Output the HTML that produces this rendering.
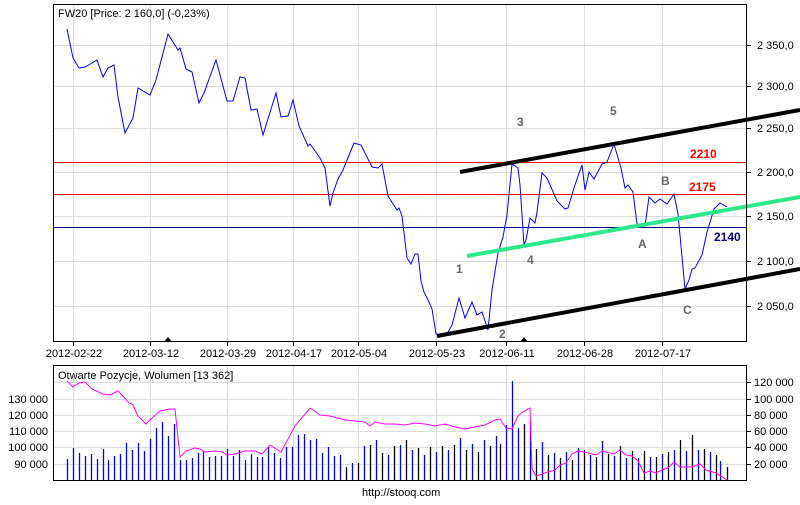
<!DOCTYPE html>
<html><head><meta charset="utf-8"><style>
body{margin:0;background:#fff;width:800px;height:500px;overflow:hidden}
svg text{font-family:"Liberation Sans",sans-serif;font-size:11px;fill:#000}
</style></head><body>
<svg width="800" height="500" xmlns="http://www.w3.org/2000/svg">
<rect width="800" height="500" fill="#fff"/>
<g stroke="#dcdcdc" stroke-width="1">
<path d="M73.5 4V342M150.5 4V342M227.5 4V342M293.5 4V342M358.5 4V342M436.5 4V342M506.5 4V342M584.5 4V342M662.5 4V342"/>
<path d="M53 45.5H747M53 86.5H747M53 128.5H747M53 172.5H747M53 216.5H747M53 261.5H747M53 306.5H747"/>
<path d="M73.5 366V480M150.5 366V480M227.5 366V480M293.5 366V480M358.5 366V480M436.5 366V480M506.5 366V480M584.5 366V480M662.5 366V480"/>
<path d="M53 382.5H747M53 399.5H747M53 415.5H747M53 431.5H747M53 447.5H747M53 464.5H747"/>
</g>
<path d="M53 162.5H747M53 194.5H747" stroke="#f00" stroke-width="1"/>
<path d="M53 227.5H747" stroke="#000080" stroke-width="1"/>
<polyline fill="none" stroke="#00f" stroke-width="1" points="67,29 73,58 79,68 85,67 92,63 97,60 103,77 108,68 114,65 118,97 125,133 133,118 138,88 150,95 156,80 168,34 178,50 180,48 186,69 192,72 199,103 204,93 216,60 227,101 233,101 240,77 245,78 251,110 257,109 263,135 276,93 281,117 288,116 293,100 299,126 308,146 310,144 320,158 325,168 330,206 333,193 338,179 343,170 354,143 361,145 372,167 378,168 382,164 388,196 397,210 399,208 402,216 407,258 411,264 415,254 418,254 421,281 424,292 429,302 432,309 436,334 441,335 447,334 452,325 459,298 465,318 472,302 477,315 482,312 488,330 492,290 498,253 503,237 507,215 512,164 518,168 520,185 524,245 526,240 530,218 535,223 537,212 542,173 547,178 557,201 565,209 568,208 574,188 577,179 582,165 585,190 589,172 594,179 602,164 607,162 614,144 621,168 625,188 628,185 633,192 637,224 641,224 645,226 649,197 655,203 660,199 667,204 674,194 678,214 681,246 685,289 689,280 692,269 695,268 702,255 707,232 714,209 720,203 727,207"/>
<path d="M460 172L800 110" stroke="#000" stroke-width="4"/>
<path d="M437 336L800 269" stroke="#000" stroke-width="4"/>
<path d="M467 256L800 197" stroke="#2de88a" stroke-width="4"/>
<text x="517" y="126" style="fill:#666;font-size:12px;font-weight:bold">3</text>
<text x="610" y="115" style="fill:#666;font-size:12px;font-weight:bold">5</text>
<text x="456" y="273" style="fill:#666;font-size:12px;font-weight:bold">1</text>
<text x="527" y="264" style="fill:#666;font-size:12px;font-weight:bold">4</text>
<text x="499" y="338" style="fill:#666;font-size:12px;font-weight:bold">2</text>
<text x="638" y="248" style="fill:#666;font-size:12px;font-weight:bold">A</text>
<text x="661" y="185" style="fill:#666;font-size:12px;font-weight:bold">B</text>
<text x="683" y="314" style="fill:#666;font-size:12px;font-weight:bold">C</text>
<text x="690" y="158" style="fill:#f00;font-size:12px;font-weight:bold">2210</text>
<text x="689" y="191" style="fill:#f00;font-size:12px;font-weight:bold">2175</text>
<text x="714" y="241" style="fill:#000080;font-size:12px;font-weight:bold">2140</text>
<rect x="53.5" y="4.5" width="693" height="337" fill="none" stroke="#000"/>
<text x="58" y="17">FW20 [Price: 2 160,0] (-0,23%)</text>
<path d="M164 342L168 337L172 342ZM520 342L524 337L528 342Z" fill="#000"/>
<text x="757" y="49">2 350,0</text><text x="757" y="90">2 300,0</text><text x="757" y="132">2 250,0</text><text x="757" y="176">2 200,0</text><text x="757" y="220">2 150,0</text><text x="757" y="265">2 100,0</text><text x="757" y="310">2 050,0</text>
<g stroke="#000"><path d="M73.5 342V346M150.5 342V346M227.5 342V346M293.5 342V346M358.5 342V346M436.5 342V346M506.5 342V346M584.5 342V346M662.5 342V346M747 45.5H751M747 86.5H751M747 128.5H751M747 172.5H751M747 216.5H751M747 261.5H751M747 306.5H751"/></g>
<text x="74" y="357" text-anchor="middle">2012-02-22</text><text x="151" y="357" text-anchor="middle">2012-03-12</text><text x="228" y="357" text-anchor="middle">2012-03-29</text><text x="294" y="357" text-anchor="middle">2012-04-17</text><text x="359" y="357" text-anchor="middle">2012-05-04</text><text x="437" y="357" text-anchor="middle">2012-05-23</text><text x="507" y="357" text-anchor="middle">2012-06-11</text><text x="585" y="357" text-anchor="middle">2012-06-28</text><text x="663" y="357" text-anchor="middle">2012-07-17</text>
<g id="bars" stroke-width="1.3"></g>
<polyline fill="none" stroke="#f0f" stroke-width="1" points="67,381 73,387 79,383 85,382 92,389 103,394 110,395 118,391 123,396 128,402 133,405 138,416 146,424 152,418 160,411 170,409 175,409 180,457 186,451 195,448 200,449 205,452 215,451 222,452 227,455 235,454 245,451 255,451 262,454 270,445 281,452 295,426 310,408 320,415 330,416 345,420 355,421 365,422 370,426 375,422 385,424 395,424 405,425 415,423 425,424 435,426 445,424 455,427 465,429 475,427 485,425 495,420 500,419 506,428 512,429 518,416 524,411 530,408 532,469 536,476 548,472 555,470 560,465 566,463 572,454 578,451 584,452 596,455 602,451 614,454 620,450 626,455 632,456 638,461 644,473 650,471 656,473 662,470 668,468 674,462 680,467 692,467 700,464 706,470 716,473 727,480"/>
<rect x="53.5" y="365.5" width="693" height="115" fill="none" stroke="#000"/>
<text x="58" y="379">Otwarte Pozycje, Wolumen [13 362]</text>
<text x="48" y="403" text-anchor="end">130 000</text><text x="48" y="419" text-anchor="end">120 000</text><text x="48" y="435" text-anchor="end">110 000</text><text x="48" y="451" text-anchor="end">100 000</text><text x="48" y="468" text-anchor="end">90 000</text>
<text x="754" y="386">120 000</text><text x="754" y="403">100 000</text><text x="754" y="419">80 000</text><text x="754" y="435">60 000</text><text x="754" y="451">40 000</text><text x="754" y="468">20 000</text>
<g stroke="#000"><path d="M747 382.5H751M747 399.5H751M747 415.5H751M747 431.5H751M747 447.5H751M747 464.5H751"/></g>
<text x="362" y="496">http://stooq.com</text>
</svg>
<script>
var d=[[67,459],[73,448],[79,453],[85,456],[91,454],[97,459],[103,449],[108,460],[114,456],[120,454],[126,443],[132,450],[138,443],[144,451],[150,439],[156,428],[162,422],[168,436],[174,424],[180,460],[186,460],[192,458],[198,453],[203,451],[209,457],[215,456],[221,456],[227,449],[233,456],[239,450],[245,460],[251,454],[257,457],[262,457],[268,447],[274,453],[280,458],[286,447],[292,447],[298,435],[304,434],[310,440],[316,439],[322,453],[328,447],[334,456],[340,455],[346,467],[352,463],[358,463],[364,446],[370,445],[376,440],[382,453],[388,455],[394,446],[400,445],[406,440],[412,450],[418,448],[424,455],[430,447],[436,452],[442,446],[448,450],[454,445],[460,438],[466,450],[472,444],[478,452],[484,440],[490,446],[496,436],[500,444],[506,425],[512,381],[518,428],[524,424],[530,421],[536,449],[542,442],[548,455],[554,453],[560,458],[566,452],[572,460],[578,448],[584,450],[590,455],[596,457],[602,441],[608,454],[614,456],[620,446],[626,458],[632,451],[638,458],[644,451],[650,457],[656,457],[662,454],[668,452],[674,450],[680,440],[686,451],[692,435],[698,450],[704,449],[710,452],[716,455],[720,461],[727,467]];
var g=document.getElementById('bars'),s='';
d.forEach(function(p,i){var c=(p[0]>340&&p[0]!=512&&i%2==1)?'#000':'#00f';s+='<line x1="'+(p[0]+.5)+'" x2="'+(p[0]+.5)+'" y1="480" y2="'+p[1]+'" stroke="'+c+'"/>';});
g.innerHTML=s;
</script>
</body></html>
